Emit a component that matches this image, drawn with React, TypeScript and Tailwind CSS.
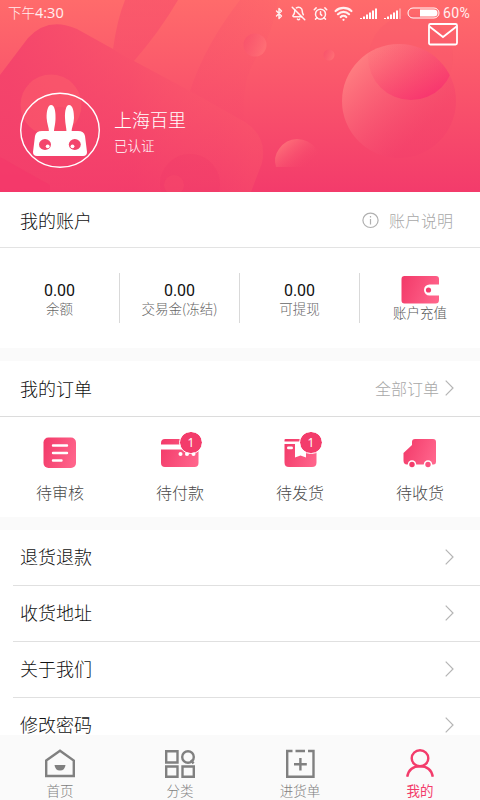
import type { ReactNode } from "react";
import { AlarmClock, BellOff, Bluetooth, Wifi } from "lucide-react";

const GRADIENT = "url(#brand)";

function HeroBackground() {
  return (
    <svg className="absolute inset-0 h-full w-full" viewBox="0 0 480 192" fill="none">
      <defs>
        <linearGradient id="hero" x1="0" y1="0" x2="0" y2="1">
          <stop stopColor="#ff6b6b" />
          <stop offset="1" stopColor="#f33b6b" />
        </linearGradient>
        <linearGradient id="bubble" x1="0.05" y1="0.2" x2="0.65" y2="0.8">
          <stop stopColor="#ff8082" />
          <stop offset="1" stopColor="#f33f6b" stopOpacity="0.4" />
        </linearGradient>
        <linearGradient id="halfBubble" x1="0" y1="0.2" x2="0.8" y2="0.8">
          <stop stopColor="#ff787c" />
          <stop offset="1" stopColor="#f6446b" stopOpacity="0.1" />
        </linearGradient>
        <linearGradient id="overlap" x1="0.25" y1="0.2" x2="0.65" y2="1">
          <stop stopColor="#fb6070" stopOpacity="0" />
          <stop offset="0.35" stopColor="#fb5070" stopOpacity="0.2" />
          <stop offset="1" stopColor="#f8316f" stopOpacity="0.85" />
        </linearGradient>
        <linearGradient id="dot" x1="0" y1="0" x2="1" y2="0.4">
          <stop stopColor="#f64c6b" stopOpacity="0.6" />
          <stop offset="1" stopColor="#ff7076" stopOpacity="0.8" />
        </linearGradient>
        <linearGradient id="body" x1="10" y1="100" x2="250" y2="90" gradientUnits="userSpaceOnUse">
          <stop stopColor="#f33f6b" stopOpacity="0.8" />
          <stop offset="0.5" stopColor="#f33f6b" stopOpacity="0.4" />
          <stop offset="0.85" stopColor="#f8556b" stopOpacity="0.2" />
          <stop offset="1" stopColor="#fb5c6b" stopOpacity="0.3" />
        </linearGradient>
        <linearGradient id="ear" x1="0" y1="0" x2="0" y2="120" gradientUnits="userSpaceOnUse">
          <stop stopColor="#f33f6b" stopOpacity="0.4" />
          <stop offset="1" stopColor="#f33f6b" stopOpacity="0.3" />
        </linearGradient>
        <linearGradient id="farEar" x1="195" y1="50" x2="280" y2="60" gradientUnits="userSpaceOnUse">
          <stop stopColor="#f5486b" stopOpacity="0.28" />
          <stop offset="1" stopColor="#f5486b" stopOpacity="0.05" />
        </linearGradient>
        <clipPath id="bubbleClip">
          <circle cx="399" cy="101" r="57" />
        </clipPath>
      </defs>
      <path fill="url(#hero)" d="M0 0h480v192H0z" />
      <path
        fill="url(#body)"
        d="M0 75 28 38Q48 16 77 29L113 49 134 61 190 91 245 122Q268 137 262 163L251 192H50L0 157z"
      />
      <path fill="url(#ear)" d="M113 49Q117 20 125 0H178Q160 31 134 61z" />
      <path fill="url(#farEar)" d="M240 0H278Q273 35 255 60 240 85 245 122L190 91Q205 45 240 0z" />
      <path fill="#f33769" fillOpacity="0.7" d="M0 157 50 185V192H0z" />
      <circle cx="51" cy="105" r="30.500" fill="#ff6a6c" fillOpacity="0.38" />
      <circle cx="60" cy="121" r="14" fill="#f33f6b" fillOpacity="0.3" />
      <circle cx="190" cy="184" r="30" fill="#ed3569" fillOpacity="0.24" />
      <circle cx="174" cy="185" r="10" fill="#f84b6c" fillOpacity="0.4" />
      <circle cx="255" cy="45" r="11.500" fill="url(#dot)" />
      <circle cx="329" cy="55" r="5.500" fill="url(#dot)" />
      <circle cx="411" cy="57" r="42" fill="#f8566b" fillOpacity="0.25" />
      <circle cx="399" cy="101" r="57" fill="url(#bubble)" />
      <circle cx="411" cy="57" r="43" fill="url(#overlap)" clipPath="url(#bubbleClip)" />
      <path fill="url(#halfBubble)" d="M276 167Q273 157 279 149 286 139 297 139 309 139 316 149 322 157 319 167z" />
    </svg>
  );
}

function Signal({ weak = false }: { weak?: boolean }) {
  return (
    <svg width="18" height="12" viewBox="0 0 18 12" fill="#fff">
      <path d="M0 11h2v1H0zM3 9.500h2V12H3zM6 7.500h2V12H6zM9 5.500h2V12H9zM12 3.500h2V12h-2z" />
      <path d="M15 1.500h2V12h-2z" opacity={weak ? 0.35 : 1} />
    </svg>
  );
}

function StatusBar() {
  return (
    <div className="flex h-[26px] items-center pl-2 text-[13.500px] text-white/90">
      <span className="w-[265px]">
        下午<span className="font-['Open_Sans','Noto_Sans',sans-serif] text-[14.500px] font-normal">4:30</span>
      </span>
      <Bluetooth className="h-[15px] w-[12px]" strokeWidth={2.8} />
      <BellOff className="ml-[6px] h-[15px] w-[15px]" strokeWidth={2.4} />
      <AlarmClock className="ml-[7px] h-[15px] w-[15px]" strokeWidth={2.4} />
      <Wifi className="ml-[6px] h-[19px] w-[19px]" strokeWidth={2.8} />
      <span className="ml-[7px]"><Signal /></span>
      <span className="ml-[6px]"><Signal weak /></span>
      <svg className="ml-[5px] shrink-0" width="33" height="12" viewBox="0 0 33 12" fill="none">
        <rect x="1" y="1" width="31" height="10" rx="5" stroke="#fff" />
        <path fill="#fff" d="M13 2.500h14a3.500 3.500 0 0 1 0 7H13z" />
      </svg>
      <span className="ml-[3px] pt-px font-['Roboto',sans-serif] text-[14px] font-normal tracking-[0.4px]">60%</span>
    </div>
  );
}

function Avatar() {
  return (
    <svg className="shrink-0" width="80" height="76" viewBox="20 92 80 76">
      <ellipse cx="60" cy="130.300" rx="39.300" ry="37" fill="none" stroke="#fff" strokeWidth="1.400" />
      <g fill="#fff">
        <path d="M51 105C55 105 55.800 113 55.500 119 55.300 125 54 128 54 132H49C49 128 46.800 123 46.600 118 46.500 111 48 105 51 105z" />
        <path d="M69 105C73 105 74 112 74 118 73.800 124 71.500 128 71.500 132H66.500C66.500 128 65.200 124 65 118 64.800 111 66 105 69 105z" />
        <path d="M42 131H78Q84 131 85 136L87 152Q87 156 83 156H37Q33 156 33 152L35 136Q36 131 42 131z" />
      </g>
      <g fill="#f3456c">
        <ellipse cx="45" cy="144.500" rx="6" ry="5.400" />
        <ellipse cx="74.800" cy="144.500" rx="6" ry="5.400" />
      </g>
      <circle cx="47.700" cy="146.300" r="1.900" fill="#fff" />
      <circle cx="72.500" cy="146.300" r="1.900" fill="#fff" />
    </svg>
  );
}

function Hero() {
  return (
    <header className="relative h-[192px] shrink-0 overflow-hidden">
      <HeroBackground />
      <div className="relative">
        <StatusBar />
        <div className="flex h-[22px] justify-end pr-[22px]">
          <svg className="-mt-1" width="30" height="24" viewBox="0 0 30 24" fill="none" stroke="#fff" strokeWidth="1.800">
            <rect x="1" y="2" width="28" height="20.500" rx="1.500" />
            <path d="M1.500 4.500 15 15 28.500 4.500" />
          </svg>
        </div>
        <div className="mt-[44px] flex items-start pl-5 text-white">
          <Avatar />
          <div className="ml-[14px] pt-[14px]">
            <p className="text-[18px] leading-[26px]">上海百里</p>
            <p className="mt-[3px] text-[13.500px] leading-[20px]">已认证</p>
          </div>
        </div>
      </div>
    </header>
  );
}

function Chevron() {
  return (
    <svg width="9" height="16" viewBox="0 0 9 16" fill="none" stroke="#b5b5b5" strokeWidth="1.200">
      <path d="m.700.700 7.300 7.300-7.300 7.300" />
    </svg>
  );
}

function WalletIcon() {
  return (
    <svg width="38" height="28" viewBox="0 0 38 28">
      <path fill={GRADIENT} d="M3.500 0h31.500q3 0 3 3v5.500H28.500a5.500 5.500 0 0 0 0 11H38V24q0 3.500-3.500 3.500H3.500q-3 0-3-3V3q0-3 3-3z" />
      <circle cx="27.500" cy="14" r="2.600" fill="#f33c6b" />
    </svg>
  );
}

function ReviewIcon() {
  return (
    <svg width="34" height="32" viewBox="0 0 34 32">
      <rect x="0.500" y="0.500" width="32.500" height="30.500" rx="5" fill={GRADIENT} />
      <path d="M10 8.500h14M10 16h14M10 23.500h8.500" stroke="#fff" strokeWidth="2.400" strokeLinecap="round" />
    </svg>
  );
}

function CardIcon() {
  return (
    <svg width="38" height="28" viewBox="0 0 38 28">
      <path fill={GRADIENT} d="M4 0h30q3.500 0 3.500 4v1.500H0V4q0-4 4-4zM0 10.500h37.500V24q0 4-4 4H4q-4 0-4-4z" />
      <g fill="#fff">
        <circle cx="19.500" cy="15" r="2" />
        <circle cx="26" cy="15" r="2" />
        <circle cx="32.500" cy="15" r="2" />
      </g>
    </svg>
  );
}

function BoxIcon() {
  return (
    <svg width="33" height="28" viewBox="0 0 33 28">
      <path fill={GRADIENT} d="M1.500 0H17v2.500H.5V1q0-1 1-1zM.5 5H11v13.500l5.500-2 5.500 2V5h10.500v18.500q0 4.500-4.500 4.500H5Q.5 28 .5 23.500z" />
      <rect x="3" y="7.500" width="6" height="2.800" rx="1.400" fill="#fff" />
    </svg>
  );
}

function TruckIcon() {
  return (
    <svg width="34" height="29" viewBox="0 0 34 29">
      <path fill={GRADIENT} d="M12 0h18q3 0 3 3v20q0 2-2 2.500H4q-3.500 0-3.500-4V14L9 6V3q0-3 3-3z" />
      <circle cx="9" cy="25.500" r="4.200" fill="#fff" />
      <circle cx="25" cy="25.500" r="4.200" fill="#fff" />
      <circle cx="9" cy="25.500" r="2.700" fill="#f33c6b" />
      <circle cx="25" cy="25.500" r="2.700" fill="#fb5280" />
    </svg>
  );
}

const balances = [
  { value: "0.00", label: "余额" },
  { value: "0.00", label: "交易金(冻结)" },
  { value: "0.00", label: "可提现" },
];

function AccountSection() {
  return (
    <section className="shrink-0 bg-white">
      <div className="flex h-[56px] items-center justify-between border-b border-[#e3e3e3] pt-px pr-[27px] pl-5">
        <h2 className="text-[18px] text-[#111]">我的账户</h2>
        <div className="flex items-center text-[16px] text-[#a8a8a8]">
          <svg className="mr-[10px]" width="17" height="17" viewBox="0 0 17 17" fill="none" stroke="#b0b0b0" strokeWidth="1.200">
            <ellipse cx="8.500" cy="8.300" rx="7.600" ry="7.200" />
            <path d="M8.500 7v5.500M8.500 4v1.500" />
          </svg>
          账户说明
        </div>
      </div>
      <div className="grid h-[100px] grid-cols-4 pt-[25px]">
        {balances.map((item) => (
          <div key={item.label} className="h-[50px] border-r border-[#d9d9d9] pt-[8px] text-center">
            <p className="font-['Roboto',sans-serif] text-[16px] leading-[19px] font-normal text-[#111]">{item.value}</p>
            <p className="text-[13.500px] leading-[17px] text-[#666]">{item.label}</p>
          </div>
        ))}
        <div className="flex flex-col items-center pt-[3px]">
          <WalletIcon />
          <p className="-mt-px text-[13.500px] leading-[18px] text-[#555]">账户充值</p>
        </div>
      </div>
    </section>
  );
}

const orders: { label: string; icon: ReactNode; count?: number }[] = [
  { label: "待审核", icon: <ReviewIcon /> },
  { label: "待付款", icon: <CardIcon />, count: 1 },
  { label: "待发货", icon: <BoxIcon />, count: 1 },
  { label: "待收货", icon: <TruckIcon /> },
];

function OrderSection() {
  return (
    <section className="mt-[13px] shrink-0 bg-white">
      <div className="flex h-[56px] items-center justify-between border-b border-[#dcdcdc] pr-[26px] pb-px pl-5">
        <h2 className="text-[18px] text-[#111]">我的订单</h2>
        <div className="flex items-center gap-[6px] text-[16px] text-[#a8a8a8]">
          全部订单
          <Chevron />
        </div>
      </div>
      <div className="grid h-[100px] grid-cols-4">
        {orders.map((order) => (
          <div key={order.label} className="flex flex-col items-center pt-[19px]">
            <div className="relative flex h-[34px] items-center">
              {order.icon}
              {order.count && (
                <span className="absolute -top-[4px] left-1/2 flex h-[21px] w-[22px] items-center justify-center rounded-full bg-[#f33c6b] font-['Noto_Sans',sans-serif] text-[12px] font-normal text-white outline outline-white">
                  {order.count}
                </span>
              )}
            </div>
            <p className="mt-[10px] text-[16px] leading-[24px] text-[#4a4a4a]">{order.label}</p>
          </div>
        ))}
      </div>
    </section>
  );
}

const links = ["退货退款", "收货地址", "关于我们", "修改密码"];

function LinkList() {
  return (
    <section className="mt-[13px] min-h-0 flex-1 overflow-hidden bg-white">
      {links.map((link) => (
        <div key={link} className="ml-[13px] flex h-[56px] items-center justify-between border-b border-[#e0e0e0] pr-[26px] pb-px pl-[7px]">
          <span className="pb-[2px] text-[18px] leading-none text-[#111]">{link}</span>
          <Chevron />
        </div>
      ))}
    </section>
  );
}

const tabs: { label: string; icon: ReactNode; active?: boolean }[] = [
  {
    label: "首页",
    icon: (
      <>
        <path d="M1.200 11.500 15 1.700 28.800 11.500V27H1.200z" />
        <path d="M9.500 16h11q-.7 5.500-5.500 5.500T9.500 16z" fill="currentColor" stroke="none" />
      </>
    ),
  },
  {
    label: "分类",
    icon: (
      <>
        <path d="M1.200 2.200h11.300v11.300H1.200zM1.200 17.500h11.300v10.300H1.200zM17.500 17.500h11.300v10.300H17.500z" />
        <circle cx="23" cy="8" r="5.800" />
        <path d="m26 11 2.500 3.500" />
      </>
    ),
  },
  {
    label: "进货单",
    icon: <path d="M7.500 2H2.200v25.800h26.300V2h-5.500M10.500 2h9.500M15.400 9v12.500M9 15.200h12.800" />,
  },
  {
    label: "我的",
    active: true,
    icon: (
      <>
        <ellipse cx="15" cy="9.200" rx="8.300" ry="8" />
        <path d="M2.200 27.800Q4 17.200 15 17.200T27.800 27.800" />
      </>
    ),
  },
];

function TabBar() {
  return (
    <nav className="grid h-[65px] shrink-0 grid-cols-4 bg-[#fafafa]">
      {tabs.map((tab) => (
        <div key={tab.label} className={tab.active ? "flex flex-col items-center pt-[14px] font-normal text-[#f33c6b]" : "flex flex-col items-center pt-[14px] text-[#808080]"}>
          <svg width="30" height="30" viewBox="0 0 30 30" fill="none" stroke="currentColor" strokeWidth="2.400">
            {tab.icon}
          </svg>
          <span className="mt-[2px] text-[13.500px] leading-[18px]">{tab.label}</span>
        </div>
      ))}
    </nav>
  );
}

export default function App() {
  return (
    <main className="flex h-[800px] w-[480px] flex-col overflow-hidden bg-[#fafafa] font-['Noto_Sans_CJK_SC',sans-serif] font-light">
      <svg className="absolute h-0 w-0">
        <linearGradient id="brand" x1="0" y1="0.300" x2="1" y2="0.600">
          <stop stopColor="#f33c6b" />
          <stop offset="1" stopColor="#ff648b" />
        </linearGradient>
      </svg>
      <Hero />
      <AccountSection />
      <OrderSection />
      <LinkList />
      <TabBar />
    </main>
  );
}
